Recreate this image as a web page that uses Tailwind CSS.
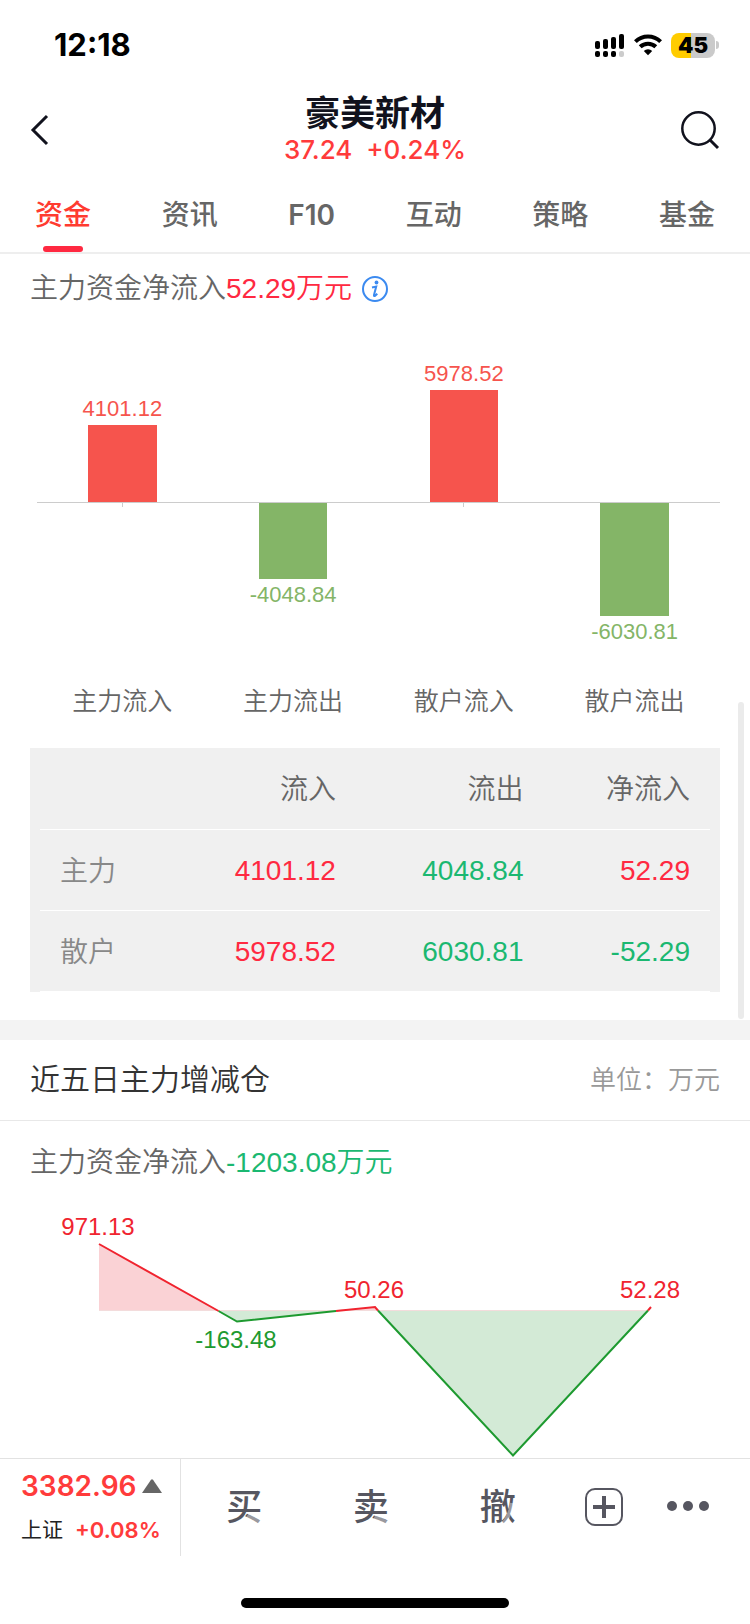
<!DOCTYPE html>
<html lang="zh-CN">
<head>
    <meta charset="UTF-8">
    <meta name="viewport" content="width=device-width, initial-scale=1.0">
    <title>豪美新材 - 资金</title>
    <script src="https://cdn.jsdelivr.net/npm/@tailwindcss/browser@4"></script>
</head>
<body class="relative flex flex-col min-h-screen bg-white text-[#666666] font-['Liberation_Sans','Noto_Sans_CJK_SC',sans-serif]">

    <!-- Status bar -->
    <div class="flex items-center justify-between h-[88px] pt-[2px] pl-[54px] pr-[31px] text-black font-['Inter',sans-serif]">
        <span class="text-[31px] leading-8 font-bold">12:18</span>
        <div class="flex items-center gap-[9px]">
            <svg class="w-[31px] h-[26px]" viewBox="0 0 31 26">
                <rect x="1" y="9" width="5" height="8" rx="2"/>
                <rect x="9" y="7" width="5" height="10" rx="2"/>
                <rect x="17" y="5" width="5" height="12" rx="2"/>
                <rect x="25" y="2" width="5" height="15" rx="2"/>
                <rect x="1" y="19" width="5" height="6" rx="2"/>
                <rect x="9" y="19" width="5" height="6" rx="2"/>
                <rect x="17" y="19" width="5" height="6" rx="2"/>
                <rect x="25" y="19" width="5" height="6" rx="2" fill="#cccccc"/>
            </svg>
            <svg class="w-[28px] h-[22px]" viewBox="0 0 28 22" fill="none" stroke="#000" stroke-width="4">
                <path d="M1.4 7.6a18 18 0 0 1 25.2 0"/>
                <path d="M6.2 12.8a11.200 11.200 0 0 1 15.600 0"/>
                <path d="M14 21.200l-4.200-4.200a6 6 0 0 1 8.400 0z" fill="#000" stroke="none"/>
            </svg>
            <div class="flex items-center gap-px">
                <div class="flex items-center justify-center w-[44px] h-[25px] rounded-lg bg-linear-to-r from-[#ffcc00] from-45% to-[#cacaca] to-45% text-[22px] leading-6 font-black">45</div>
                <span class="w-[3px] h-2 rounded-r-full bg-[#cacaca]"></span>
            </div>
        </div>
    </div>

    <!-- Stock header -->
    <header class="flex items-center justify-between h-[84px] px-[30px] text-[#11121d]">
        <button type="button" aria-label="返回" class="w-10 h-10">
            <svg class="w-5 h-8" viewBox="0 0 20 32" fill="none" stroke="currentColor" stroke-width="3">
                <path d="M17 2L3 16l14 14"/>
            </svg>
        </button>
        <div class="flex flex-col items-center">
            <h1 class="text-[35px] leading-10 font-bold">豪美新材</h1>
            <p class="text-[26px] leading-8 font-medium text-[#ff3b3b] whitespace-pre font-['Inter',sans-serif]">37.24  +0.24%</p>
        </div>
        <button type="button" aria-label="搜索" class="w-10 h-10">
            <svg class="w-10 h-10" viewBox="0 0 40 40" fill="none" stroke="currentColor" stroke-width="3">
                <circle cx="18.500" cy="18.500" r="16.200" stroke-width="2.500"/>
                <path d="M30 30l8 8"/>
            </svg>
        </button>
    </header>

    <!-- Tabs -->
    <nav class="flex justify-between h-[82px] px-[35px] border-b-2 border-[#eeeeee] text-[28px] leading-10 font-medium font-['Inter','Noto_Sans_CJK_SC',sans-serif]">
        <a href="#" class="flex flex-col items-center justify-between pt-[23px] text-[#ff3b30]">资金<span class="w-10 h-[6px] rounded-full bg-[#ff2941]"></span></a>
        <a href="#" class="pt-[23px]">资讯</a>
        <a href="#" class="pt-[23px] font-semibold">F10</a>
        <a href="#" class="pt-[23px]">互动</a>
        <a href="#" class="pt-[23px]">策略</a>
        <a href="#" class="pt-[23px]">基金</a>
    </nav>

    <main class="flex-1">
        <section class="px-[30px] pb-7">
            <div class="flex items-center gap-[9px] h-[69px] pt-px">
                <h2 class="text-[28px] leading-10 font-[350]">主力资金净流入<span class="text-[#ff2941]">52.29万元</span></h2>
                <button type="button" aria-label="说明">
                    <svg class="w-[28px] h-[28px]" viewBox="0 0 28 28">
                        <circle cx="14" cy="14" r="12" fill="none" stroke="#3b8af0" stroke-width="2"/>
                        <circle cx="15.500" cy="7.500" r="1.900" fill="#3b8af0"/>
                        <path d="M11 12.500l4.200-1-2.200 8.500q-.3 1.500 1 .8l2.300-2" fill="none" stroke="#3b8af0" stroke-width="2"/>
                    </svg>
                </button>
            </div>

            <!-- Bar chart: inflow above the axis, outflow below -->
            <div class="pl-[7px]">
                <div class="grid grid-cols-4 h-[180px] border-b border-[#cccccc] text-[22px] leading-6 text-[#f6544d]">
                    <div class="flex flex-col items-center justify-end gap-1">
                        4101.12
                        <div class="w-2/5 bg-[#f6544d]" style="height: 77px"></div>
                    </div>
                    <div></div>
                    <div class="flex flex-col items-center justify-end gap-1">
                        5978.52
                        <div class="w-2/5 bg-[#f6544d]" style="height: 112px"></div>
                    </div>
                </div>
                <div class="grid grid-cols-4 h-[174px] text-[22px] leading-6 text-[#84b567]">
                    <div class="flex justify-center"><span class="w-px h-1 bg-[#cccccc]"></span></div>
                    <div class="flex flex-col items-center gap-1">
                        <div class="w-2/5 bg-[#84b567]" style="height: 76px"></div>
                        -4048.84
                    </div>
                    <div class="flex justify-center"><span class="w-px h-1 bg-[#cccccc]"></span></div>
                    <div class="flex flex-col items-center gap-1">
                        <div class="w-2/5 bg-[#84b567]" style="height: 113px"></div>
                        -6030.81
                    </div>
                </div>
                <div class="grid grid-cols-4 h-[71px] text-[25px] leading-12 font-[350] text-center">
                    <span>主力流入</span>
                    <span>主力流出</span>
                    <span>散户流入</span>
                    <span>散户流出</span>
                </div>
            </div>

            <div class="px-[10px] bg-[#f0f0f0]">
                <table class="w-full table-fixed text-[28px] leading-10 text-right">
                    <thead>
                        <tr class="h-[81px] border-b border-white">
                            <td class="w-[19%]"></td>
                            <th scope="col" class="w-[28%] pt-1 pr-[19px] font-[350]">流入</th>
                            <th scope="col" class="w-[28%] pt-1 pr-[19px] font-[350]">流出</th>
                            <th scope="col" class="w-[25%] pt-1 pr-5 font-[350]">净流入</th>
                        </tr>
                    </thead>
                    <tbody class="text-[#1bb871]">
                        <tr class="h-[81px] border-b border-white">
                            <th scope="row" class="pt-1 pl-5 text-left font-[350] text-[#888888]">主力</th>
                            <td class="pt-[2px] pr-[19px] text-[#ff2941]">4101.12</td>
                            <td class="pt-[2px] pr-[19px]">4048.84</td>
                            <td class="pt-[2px] pr-5 text-[#ff2941]">52.29</td>
                        </tr>
                        <tr class="h-[81px] border-b border-white">
                            <th scope="row" class="pt-1 pl-5 text-left font-[350] text-[#888888]">散户</th>
                            <td class="pt-[2px] pr-[19px] text-[#ff2941]">5978.52</td>
                            <td class="pt-[2px] pr-[19px]">6030.81</td>
                            <td class="pt-[2px] pr-5">-52.29</td>
                        </tr>
                    </tbody>
                </table>
            </div>
        </section>

        <section class="border-t-20 border-[#f3f3f3]">
            <div class="flex items-center justify-between h-[81px] pt-px px-[30px] border-b border-[#e8e8e8] font-[350]">
                <h2 class="text-[30px] leading-10 text-[#333333]">近五日主力增减仓</h2>
                <span class="text-[26px] leading-10 text-[#999999]">单位：万元</span>
            </div>
            <p class="h-[79px] px-[30px] pt-[22px] text-[28px] leading-10 font-[350]">主力资金净流入<span class="text-[#1bb871]">-1203.08万元</span></p>

            <!-- Five day line chart -->
            <svg class="block w-full" viewBox="0 0 750 258" font-size="24" text-anchor="middle">
                <path d="M99 44V111H218.500z" fill="#fad2d5"/>
                <path d="M218.500 111L237 121.500 336 111z" fill="#d3ead6"/>
                <path d="M336 110L375 107l3.500 4H336z" fill="#fad2d5"/>
                <path d="M378 110.500L513 255.500 648 110.500z" fill="#d3ead6"/>
                <path d="M99 110.500H648" stroke="#f3dcdc"/>
                <g fill="none" stroke-width="2">
                    <path d="M218.500 111L237 121.500 336 111M378 110.500L513 255.500 648 110.500" stroke="#1e9a30"/>
                    <path d="M99 44L218.500 111M336 111L375 107l3 3.500M648 110.500l3-3.500" stroke="#f0242f"/>
                </g>
                <g fill="#f0242f">
                    <text x="98" y="35">971.13</text>
                    <text x="374" y="98">50.26</text>
                    <text x="650" y="98">52.28</text>
                </g>
                <text x="236" y="148" fill="#1e9a30">-163.48</text>
            </svg>
        </section>
    </main>

    <!-- Scroll indicator -->
    <div class="absolute right-[6px] top-[702px] w-[6px] h-[317px] rounded-full bg-[#ebebeb]"></div>

    <!-- Bottom trade bar -->
    <footer class="border-t border-[#e2e2e2]">
        <div class="flex h-[97px] text-[#565660]">
            <div class="w-[181px] pl-[21px] border-r border-[#e2e2e2] font-semibold text-[#ff3b3b] font-['Inter','Noto_Sans_CJK_SC',sans-serif]">
                <div class="flex items-center gap-[6px] pt-[7px] text-[28px] leading-10">
                    3382.96
                    <svg class="w-5 h-[14px]" viewBox="0 0 20 14"><path d="M9 .8q1-1.200 2 0L20 14H0z" fill="#666666"/></svg>
                </div>
                <div class="flex items-center gap-3 pt-[4px] text-[22px] leading-10">
                    <span class="text-[21px] font-normal text-[#222222]">上证</span>+0.08%
                </div>
            </div>
            <!-- the last stroke of each label is washed out by a translucent line -->
            <div class="flex-1 grid grid-cols-[3fr_3fr_3fr_2fr_2fr] pr-5 text-[36px] leading-10 font-medium">
                <button type="button"><span class="relative inline-block">买<svg class="absolute left-0 top-0 w-9 h-10" viewBox="0 0 36 40" fill="none" stroke="#fff" stroke-opacity=".4"><path d="M21 28L36 37" stroke-width="8"/></svg></span></button>
                <button type="button"><span class="relative inline-block">卖<svg class="absolute left-0 top-0 w-9 h-10" viewBox="0 0 36 40" fill="none" stroke="#fff" stroke-opacity=".4"><path d="M21 30L36 37" stroke-width="7"/></svg></span></button>
                <button type="button"><span class="relative inline-block">撤<svg class="absolute left-0 top-0 w-9 h-10" viewBox="0 0 36 40" fill="none" stroke="#fff" stroke-opacity=".4"><path d="M32 15Q30 29 22 37" stroke-width="4"/></svg></span></button>
                <button type="button" aria-label="添加" class="flex items-center justify-center pb-[2px] pl-[2px]">
                    <svg class="w-10 h-10" viewBox="0 0 40 40" fill="none" stroke="currentColor">
                        <rect x="2" y="2" width="36" height="36" rx="9" stroke-width="2"/>
                        <path d="M20 9v22M9 20h22" stroke-width="4"/>
                    </svg>
                </button>
                <button type="button" aria-label="更多" class="flex items-center justify-center gap-[6px] pb-1">
                    <span class="size-[10px] rounded-full bg-[#565660]"></span>
                    <span class="size-[10px] rounded-full bg-[#565660]"></span>
                    <span class="size-[10px] rounded-full bg-[#565660]"></span>
                </button>
            </div>
        </div>
        <div class="flex justify-center pt-[42px] pb-4">
            <span class="w-[268px] h-[10px] rounded-full bg-black"></span>
        </div>
    </footer>
</body>
</html>
